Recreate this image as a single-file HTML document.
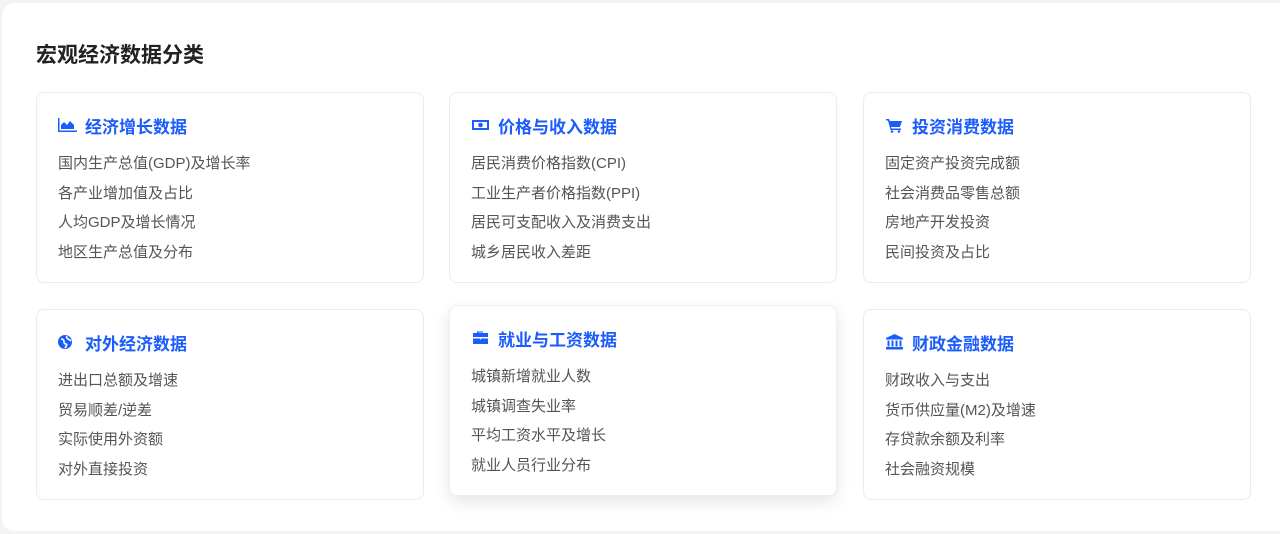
<!DOCTYPE html>
<html><head><meta charset="utf-8"><style>
*{margin:0;padding:0;box-sizing:border-box}
body{width:1280px;height:534px;background:#f2f3f5;font-family:"Liberation Sans","Noto Sans CJK SC",sans-serif;overflow:hidden;position:relative}
.panel{position:absolute;left:2px;top:3px;width:1290px;height:528px;background:#fff;border-radius:12px}
h1{position:absolute;left:36px;top:39px;font-size:21px;font-weight:700;color:#222}
.card{position:absolute;width:388px;height:191px;border:1px solid #ececef;border-radius:8px;background:#fff;padding:19px 21px}
.card.hov{box-shadow:0 6px 16px rgba(0,0,0,.1);border-color:#eee}
.t{display:flex;align-items:center;height:26px;font-size:17px;font-weight:700;color:#1b5cfb}
.t svg{width:19px;height:16px;margin-right:8px;fill:#1b5cfb}
ul{list-style:none;margin-top:11px}
li{font-size:15px;color:#555;height:29.5px;line-height:29.5px}
</style></head><body>
<div class="panel"></div>
<h1>宏观经济数据分类</h1>

<div class="card" style="left:36px;top:92px"><div class="t"><svg viewBox="0 0 19 16"><path d="M0 1h1.5v12.5H19V15H0z"/><path d="M3 12V8l3-3 3 3 3-4 4 4v4z"/></svg>经济增长数据</div>
<ul><li>国内生产总值(GDP)及增长率</li><li>各产业增加值及占比</li><li>人均GDP及增长情况</li><li>地区生产总值及分布</li></ul></div>

<div class="card" style="left:449px;top:92px"><div class="t"><svg viewBox="0 0 19 16"><path d="M1 3h17v10H1z M3 5v6h13V5z"/><circle cx="9.5" cy="8" r="2.3"/></svg>价格与收入数据</div>
<ul><li>居民消费价格指数(CPI)</li><li>工业生产者价格指数(PPI)</li><li>居民可支配收入及消费支出</li><li>城乡居民收入差距</li></ul></div>

<div class="card" style="left:863px;top:92px"><div class="t"><svg viewBox="0 0 19 16"><path d="M1 2h3l1 2h12l-2 6H6l.5 1.5H16V13H5.5L3 3.5H1z"/><circle cx="7" cy="14.5" r="1.3"/><circle cx="14" cy="14.5" r="1.3"/></svg>投资消费数据</div>
<ul><li>固定资产投资完成额</li><li>社会消费品零售总额</li><li>房地产开发投资</li><li>民间投资及占比</li></ul></div>

<div class="card" style="left:36px;top:309px"><div class="t"><svg viewBox="0 0 19 16"><circle cx="7" cy="8" r="7"/><path d="M3 5q3 0 3 2.5t2 2.5-1 4M9 2q-1 2 1 3t3 2" stroke="#fff" stroke-width="1.6" fill="none"/></svg>对外经济数据</div>
<ul><li>进出口总额及增速</li><li>贸易顺差/逆差</li><li>实际使用外资额</li><li>对外直接投资</li></ul></div>

<div class="card hov" style="left:449px;top:305px"><div class="t"><svg viewBox="0 0 19 16"><path d="M6 3V1.5h6V3h5v4H2V3zM7.5 3h4V2.5h-4z"/><path d="M2 8.5h7v1h1v-1h7V14H2z"/></svg>就业与工资数据</div>
<ul><li>城镇新增就业人数</li><li>城镇调查失业率</li><li>平均工资水平及增长</li><li>就业人员行业分布</li></ul></div>

<div class="card" style="left:863px;top:309px"><div class="t"><svg viewBox="0 0 19 16"><path d="M9.5 0L18 4v1.5H1V4z"/><path d="M2.5 6.5h2v6h-2zM6.5 6.5h2v6h-2zM10.5 6.5h2v6h-2zM14.5 6.5h2v6h-2zM1 13h17v2.5H1z"/></svg>财政金融数据</div>
<ul><li>财政收入与支出</li><li>货币供应量(M2)及增速</li><li>存贷款余额及利率</li><li>社会融资规模</li></ul></div>
</body></html>
